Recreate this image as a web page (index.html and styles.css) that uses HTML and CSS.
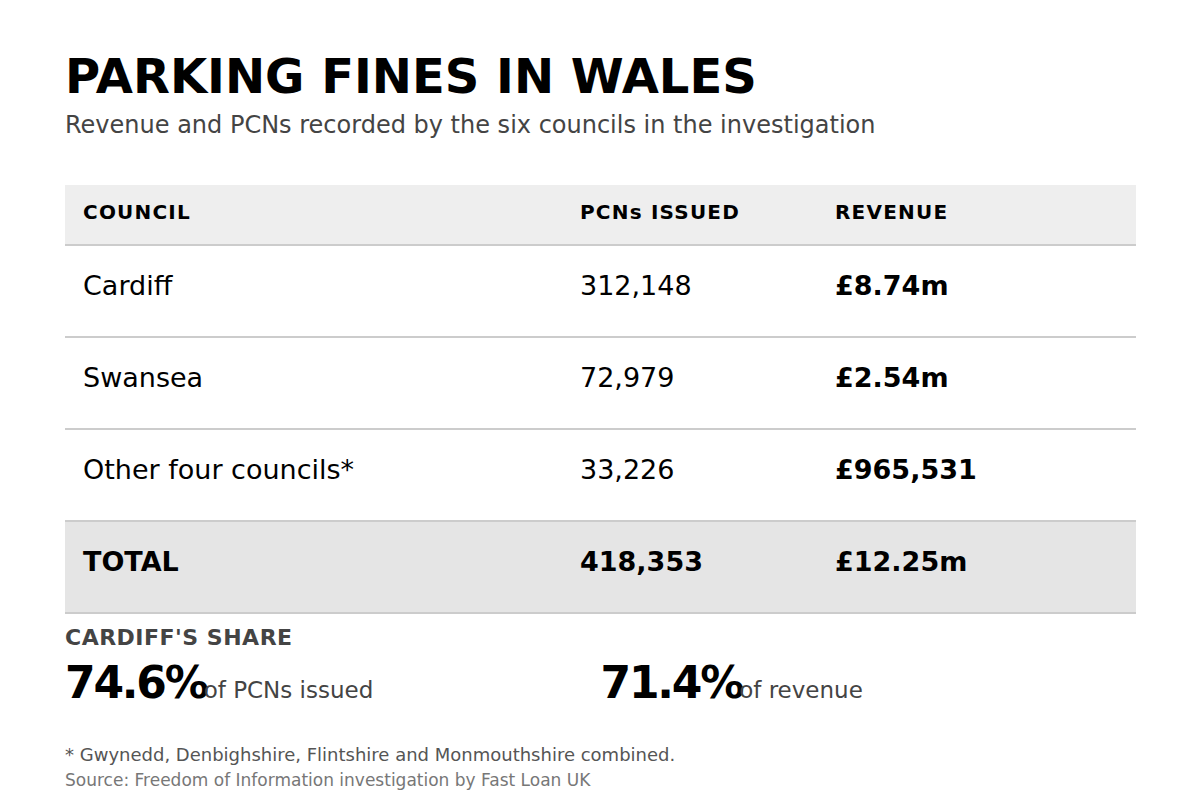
FILE: index.html
```html
<!DOCTYPE html>
<html lang="en">
<head>
<meta charset="utf-8">
<title>Parking fines in Wales</title>
<link rel="stylesheet" href="styles.css">
</head>
<body>
<main class="page">
  <h1 class="title">PARKING FINES IN WALES</h1>
  <p class="subtitle">Revenue and PCNs recorded by the six councils in the investigation</p>

  <table class="fines">
    <thead>
      <tr>
        <th class="col-council">COUNCIL</th>
        <th class="col-pcn">PCNs ISSUED</th>
        <th class="col-rev">REVENUE</th>
      </tr>
    </thead>
    <tbody>
      <tr>
        <td>Cardiff</td>
        <td>312,148</td>
        <td class="money">£8.74m</td>
      </tr>
      <tr>
        <td>Swansea</td>
        <td>72,979</td>
        <td class="money">£2.54m</td>
      </tr>
      <tr>
        <td>Other four councils*</td>
        <td>33,226</td>
        <td class="money">£965,531</td>
      </tr>
      <tr class="total">
        <td>TOTAL</td>
        <td>418,353</td>
        <td>£12.25m</td>
      </tr>
    </tbody>
  </table>

  <section class="share">
    <h2 class="share-label">CARDIFF'S SHARE</h2>
    <div class="stats">
      <div class="stat"><span class="stat-num">74.6%</span><span class="stat-text">of PCNs issued</span></div>
      <div class="stat"><span class="stat-num">71.4%</span><span class="stat-text">of revenue</span></div>
    </div>
  </section>

  <p class="footnote">* Gwynedd, Denbighshire, Flintshire and Monmouthshire combined.</p>
  <p class="source">Source: Freedom of Information investigation by Fast Loan UK</p>
</main>
</body>
</html>
```

FILE: styles.css
```css
* { box-sizing: border-box; }

html, body {
  margin: 0;
  padding: 0;
  background: #ffffff;
}

body {
  font-family: "DejaVu Sans", Verdana, sans-serif;
  color: #000;
}

.page {
  width: 1200px;
  padding: 48px 64px 0 65px;
}

.title {
  margin: 0;
  font-size: 48px;
  line-height: 1.2;
  font-weight: bold;
  color: #000;
}

.subtitle {
  margin: 5px 0 0;
  font-size: 24px;
  line-height: 1.2;
  color: #444;
}

.fines {
  margin-top: 46px;
  width: 100%;
  border-collapse: collapse;
  table-layout: fixed;
}

.col-council { width: 497px; }
.col-pcn { width: 255px; }

.fines th {
  text-align: left;
  font-size: 20px;
  font-weight: bold;
  letter-spacing: 1.2px;
  line-height: 1.2;
  background: #eeeeee;
  padding: 15px 18px 0;
  height: 60px;
  border-bottom: 2px solid #cccccc;
  vertical-align: top;
}

.fines td {
  font-size: 27px;
  line-height: 1.2;
  padding: 24px 18px 0;
  height: 92px;
  border-bottom: 2px solid #cccccc;
  vertical-align: top;
}

.fines td.money { font-weight: bold; }

.fines tr.total td {
  background: #e5e5e5;
  font-weight: bold;
}

.share { margin-top: 11px; }

.share-label {
  margin: 0;
  font-size: 22px;
  line-height: 1.2;
  font-weight: bold;
  letter-spacing: 0.5px;
  color: #444;
}

.stats {
  margin-top: 5px;
  display: grid;
  grid-template-columns: 1fr 1fr;
}

.stat {
  display: flex;
  align-items: baseline;
}

.stat-num {
  font-size: 44px;
  line-height: 1.2;
  font-weight: bold;
  letter-spacing: -0.05em;
  color: #000;
}

.stat-text {
  margin-left: -3px;
  font-size: 23px;
  line-height: 1.2;
  color: #444;
}

.footnote {
  margin: 34px 0 0;
  font-size: 18px;
  line-height: 1.2;
  color: #555;
}

.source {
  margin: 5px 0 0;
  font-size: 17px;
  line-height: 1.2;
  color: #777;
}
```
